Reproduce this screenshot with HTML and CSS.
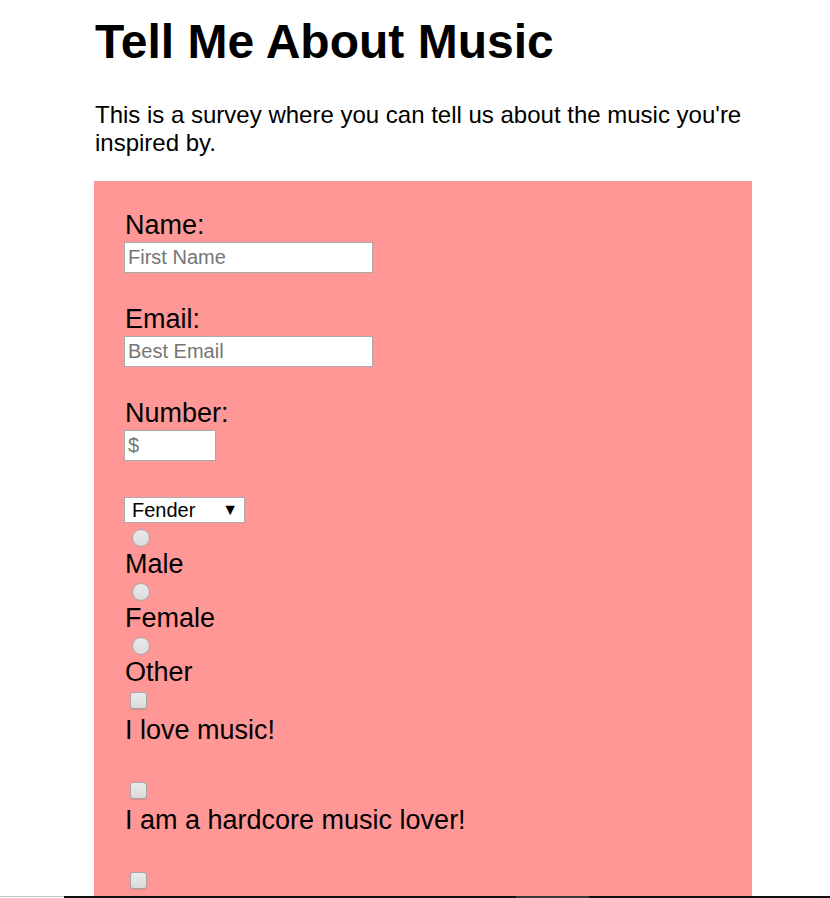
FILE: index.html
```html
<!DOCTYPE html>
<html lang="en">
<head>
<meta charset="utf-8">
<title>Tell Me About Music</title>
<link rel="stylesheet" href="styles.css">
</head>
<body>
<main class="page">
  <h1 class="title">Tell Me About Music</h1>
  <p class="intro">This is a survey where you can tell us about the music you're inspired by.</p>
  <form class="survey">
    <div class="field">
      <label class="label" for="name">Name:</label>
      <input class="text-input wide" id="name" type="text" placeholder="First Name">
    </div>
    <div class="field">
      <label class="label" for="email">Email:</label>
      <input class="text-input wide" id="email" type="email" placeholder="Best Email">
    </div>
    <div class="field">
      <label class="label" for="number">Number:</label>
      <input class="text-input narrow" id="number" type="text" placeholder="$">
    </div>
    <div class="select-box">
      <span class="select-value">Fender</span>
      <span class="select-arrow">▼</span>
    </div>
    <div class="choice-radio">
      <input class="radio" type="radio" name="gender" id="male">
      <label class="label" for="male">Male</label>
    </div>
    <div class="choice-radio">
      <input class="radio" type="radio" name="gender" id="female">
      <label class="label" for="female">Female</label>
    </div>
    <div class="choice-radio">
      <input class="radio" type="radio" name="gender" id="other">
      <label class="label" for="other">Other</label>
    </div>
    <div class="choice-check">
      <input class="check" type="checkbox" id="love">
      <label class="label" for="love">I love music!</label>
    </div>
    <div class="choice-check">
      <input class="check" type="checkbox" id="hardcore">
      <label class="label" for="hardcore">I am a hardcore music lover!</label>
    </div>
    <div class="choice-check">
      <input class="check" type="checkbox" id="third">
    </div>
  </form>
</main>
<div class="hscroll"><span class="hscroll-track"></span><span class="hscroll-thumb"></span></div>
</body>
</html>
```

FILE: styles.css
```css
html, body {
  margin: 0;
  padding: 0;
  background: #ffffff;
  overflow: hidden;
}

body {
  font-family: "Liberation Sans", Arial, sans-serif;
  color: #000000;
  height: 898px;
}

.page {
  margin-left: 94px;
  width: 658px;
}

.title {
  margin: 14px 0 0 1px;
  font-size: 48px;
  font-weight: bold;
  line-height: 55px;
}

.intro {
  margin: 32px 0 0 1px;
  font-size: 24px;
  line-height: 27.5px;
  width: 650px;
}

.survey {
  margin-top: 25px;
  background: #ff9797;
  padding: 31px 30px 30px 30px;
  display: flex;
  flex-direction: column;
  align-items: flex-start;
  min-height: 800px;
}

.label {
  display: block;
  font-size: 27px;
  line-height: 27px;
  margin-left: 1px;
}

.field {
  display: flex;
  flex-direction: column;
  align-items: flex-start;
  gap: 3px;
  margin-bottom: 33px;
}

.text-input {
  box-sizing: border-box;
  height: 31px;
  border: 1px solid #a9a9a9;
  background: #ffffff;
  font-family: "Liberation Sans", Arial, sans-serif;
  font-size: 20px;
  padding: 0 3px;
  margin: 0;
  outline: none;
}

.text-input::placeholder {
  color: #757575;
}

.wide {
  width: 249px;
}

.narrow {
  width: 92px;
}

.select-box {
  box-sizing: border-box;
  margin-top: 3px;
  width: 121px;
  height: 26px;
  border: 1px solid #a9a9a9;
  background: #ffffff;
  display: flex;
  align-items: center;
  justify-content: space-between;
  padding: 0 6px 0 7px;
  font-size: 20px;
}

.select-arrow {
  font-size: 16px;
}

.choice-radio {
  display: flex;
  flex-direction: column;
  align-items: flex-start;
  margin-top: 6px;
}

.choice-radio + .choice-radio {
  margin-top: 5px;
}

.radio {
  appearance: none;
  -webkit-appearance: none;
  box-sizing: border-box;
  width: 18px;
  height: 18px;
  margin: 0 0 4px 8px;
  border-radius: 50%;
  border: 1px solid #a6a6a6;
  background: linear-gradient(#e9e9e9, #dcdcdc);
}

.choice-check {
  display: flex;
  flex-direction: column;
  align-items: flex-start;
  margin-top: 6px;
}

.choice-check + .choice-check {
  margin-top: 38px;
}

.check {
  appearance: none;
  -webkit-appearance: none;
  box-sizing: border-box;
  width: 17px;
  height: 17px;
  margin: 0 0 7px 6px;
  border-radius: 3px;
  border: 1px solid #a6a6a6;
  background: linear-gradient(#ebebeb, #dadada);
  box-shadow: 0 1px 1px rgba(0, 0, 0, 0.12);
}

.check + .label {
  margin-top: 1px;
}

.hscroll {
  position: fixed;
  left: 0;
  right: 0;
  bottom: 0;
  height: 2px;
  display: flex;
}

.hscroll-track {
  position: absolute;
  left: 0;
  width: 64px;
  top: 0;
  height: 1px;
  background: #c8c8c8;
}

.hscroll::after {
  content: "";
  position: absolute;
  left: 64px;
  right: 0;
  top: 0;
  bottom: 0;
  background: #111111;
}

.hscroll-thumb {
  position: absolute;
  left: 516px;
  width: 73px;
  top: 0;
  bottom: 0;
  background: #3a3a3a;
  z-index: 1;
}
```
